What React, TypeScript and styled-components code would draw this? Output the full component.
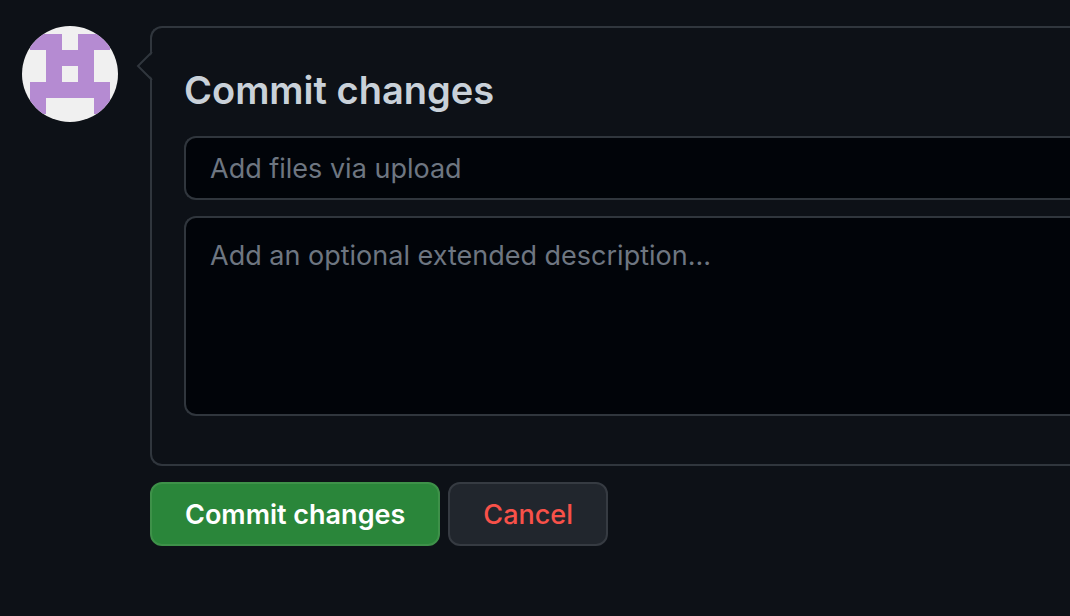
import React from "react";
import styled, { createGlobalStyle } from "styled-components";

const GlobalStyle = createGlobalStyle`
  *, *::before, *::after { box-sizing: border-box; }
  body {
    margin: 0;
    background: #0d1117;
    color: #c9d1d9;
    font-family: Inter, "Liberation Sans", sans-serif;
    overflow-x: hidden;
  }
`;

const Page = styled.main`
  display: flex;
  align-items: flex-start;
  gap: 32px;
  padding: 26px 0 70px 22px;
`;

const Avatar = styled.svg`
  flex: none;
  width: 96px;
  height: 96px;
  border-radius: 50%;
`;

const Form = styled.form`
  flex: 1;
  min-width: 0;
  display: flex;
  flex-direction: column;
  gap: 16px;
`;

const Card = styled.section`
  position: relative;
  display: flex;
  flex-direction: column;
  gap: 16px;
  padding: 38px 0 48px 32px;
  border: 2px solid #30363d;
  border-right: 0;
  border-radius: 12px 0 0 12px;
`;

const Caret = styled.svg`
  position: absolute;
  left: -16px;
  top: 22px;
  width: 18px;
  height: 32px;
`;

const Title = styled.h1`
  margin: 0;
  padding-bottom: 6px;
  font-size: 38px;
  font-weight: 600;
  line-height: 48px;
`;

const Field = styled.input`
  display: block;
  width: 100%;
  height: 64px;
  padding: 0 24px;
  border: 2px solid #30363d;
  border-right: 0;
  border-radius: 12px 0 0 12px;
  outline: none;
  background: #010409;
  color: #c9d1d9;
  font-family: inherit;
  font-size: 27px;
  line-height: 40px;
  &::placeholder { color: #6e7681; opacity: 1; }
`;

const Description = styled(Field).attrs({ as: "textarea" })`
  height: 200px;
  padding: 18px 24px;
  resize: none;
`;

const Actions = styled.div`
  display: flex;
  gap: 8px;
`;

const Button = styled.button<{ $primary?: boolean }>`
  height: 64px;
  padding: 2px 33px 0;
  border: 2px solid ${(p) => (p.$primary ? "#3e9149" : "#363b42")};
  border-radius: 12px;
  background: ${(p) => (p.$primary ? "#2a863a" : "#21262d")};
  color: ${(p) => (p.$primary ? "#ffffff" : "#f85149")};
  font-family: inherit;
  font-size: 27px;
  font-weight: ${(p) => (p.$primary ? 600 : 500)};
  line-height: 40px;
  white-space: nowrap;
  cursor: pointer;
`;

export default function App() {
  return (
    <>
      <GlobalStyle />
      <Page>
        <Avatar viewBox="0 0 96 96" role="img" aria-label="User avatar" shapeRendering="crispEdges">
          <rect width="96" height="96" fill="#f0f0f0" />
          <path
            fill="#b58bd2"
            d="M8 8H40V24H56V8H88V24H72V56H88V88H72V72H24V88H8V56H24V24H8ZM40 40V56H56V40Z"
            fillRule="evenodd"
          />
        </Avatar>
        <Form onSubmit={(e) => e.preventDefault()}>
          <Card>
            <Caret viewBox="0 0 18 32" aria-hidden="true">
              <path d="M18 2L3 16L18 30Z" fill="#0d1117" />
              <path d="M16 2L2 16L16 30" fill="none" stroke="#30363d" strokeWidth="2" />
            </Caret>
            <Title>Commit changes</Title>
            <Field type="text" aria-label="Commit message" placeholder="Add files via upload" />
            <Description
              aria-label="Extended description"
              placeholder="Add an optional extended description..."
            />
          </Card>
          <Actions>
            <Button type="submit" $primary>Commit changes</Button>
            <Button type="button">Cancel</Button>
          </Actions>
        </Form>
      </Page>
    </>
  );
}
